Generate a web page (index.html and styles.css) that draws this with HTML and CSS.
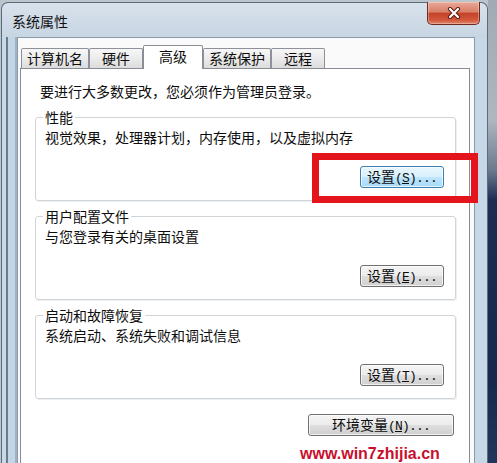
FILE: index.html
```html
<!DOCTYPE html>
<html lang="zh-CN">
<head>
    <meta charset="UTF-8">
    <title>系统属性</title>
    <link rel="stylesheet" href="styles.css">
</head>
<body>
    <div class="screen">
        <div class="window">
            <div class="titlebar">
                <span class="title">系统属性</span>
                <button class="close" aria-label="关闭">
                    <svg width="14" height="12" viewBox="0 0 14 12">
                        <path d="M3 2 L11 10 M11 2 L3 10" stroke="#5a1e12" stroke-width="4.2" stroke-linecap="round" fill="none"/>
                        <path d="M3 2 L11 10 M11 2 L3 10" stroke="#fff" stroke-width="2.2" stroke-linecap="round" fill="none"/>
                    </svg>
                </button>
            </div>
            <div class="frame">
                <div class="client">
                    <div class="tabs">
                        <div class="tab">计算机名</div>
                        <div class="tab">硬件</div>
                        <div class="tab active">高级</div>
                        <div class="tab">系统保护</div>
                        <div class="tab">远程</div>
                    </div>
                    <div class="panel">
                        <p class="note">要进行大多数更改，您必须作为管理员登录。</p>

                        <fieldset class="group">
                            <legend>性能</legend>
                            <p class="desc">视觉效果，处理器计划，内存使用，以及虚拟内存</p>
                            <div class="actions">
                                <button class="btn focused">设置<span class="mn">(<u>S</u>)...</span></button>
                            </div>
                        </fieldset>

                        <fieldset class="group">
                            <legend>用户配置文件</legend>
                            <p class="desc">与您登录有关的桌面设置</p>
                            <div class="actions">
                                <button class="btn">设置<span class="mn">(<u>E</u>)...</span></button>
                            </div>
                        </fieldset>

                        <fieldset class="group">
                            <legend>启动和故障恢复</legend>
                            <p class="desc">系统启动、系统失败和调试信息</p>
                            <div class="actions">
                                <button class="btn">设置<span class="mn">(<u>T</u>)...</span></button>
                            </div>
                        </fieldset>

                        <div class="actions env">
                            <button class="btn wide">环境变量<span class="mn">(<u>N</u>)...</span></button>
                        </div>
                    </div>
                </div>
            </div>
        </div>
        <div class="desk"></div>

        <div class="highlight"></div>
        <div class="watermark">www.win7zhijia.cn</div>
    </div>
</body>
</html>
```

FILE: styles.css
```css
* {
    box-sizing: border-box;
}
body {
    margin: 0;
    font-family: "Noto Sans CJK SC", "Noto Sans", sans-serif;
    font-size: 14px;
    color: #0d0d0d;
}
.screen {
    position: relative;
    display: flex;
    width: 497px;
    height: 463px;
    overflow: hidden;
    background-color: #bcc4cc;
}

/* window frame */
.window {
    flex: 0 0 487px;
    height: 480px;
    margin: 2px 0 0 1px;
    display: flex;
    flex-direction: column;
    border: 1px solid #5d6b79;
    border-bottom: none;
    border-radius: 7px 7px 0 0;
    background: linear-gradient(180deg, #d8e2ec 0, #c6d4e2 36px, #c9d9e7 100%);
}
.titlebar {
    display: flex;
    align-items: flex-start;
    height: 34px;
}
.title {
    margin: 10px 0 0 10px;
    line-height: 16px;
    color: #111;
}
.close {
    display: flex;
    justify-content: center;
    align-items: center;
    width: 53px;
    height: 23px;
    margin: -1px 7px 0 auto;
    padding: 0;
    border: 1px solid #6e2a1d;
    border-top: none;
    border-radius: 0 0 5px 5px;
    background: linear-gradient(180deg, #eaa898 0%, #d9806a 45%, #c4432b 52%, #d2583d 82%, #e2866a 100%);
    box-shadow: inset 0 0 0 1px rgba(255, 255, 255, 0.3);
}
.frame {
    flex: 1;
    display: flex;
    padding: 0 12px 0 15px;
    background:
        linear-gradient(90deg, #c7d9e8 0 4px, #6a7b8c 4px 6px, #c2d5e5 6px 13px, #9fb1c2 13px 15px, transparent 15px),
        #c6d8e7;
}
.client {
    flex: 1;
    display: flex;
    flex-direction: column;
    border: 1px solid #8a9bab;
    border-bottom: none;
    background-color: #fafafa;
}

/* tabs */
.tabs {
    display: flex;
    align-items: flex-end;
    padding: 7px 0 0 3px;
}
.tab {
    height: 20px;
    min-width: 54px;
    padding: 0 5px;
    border: 1px solid #8e919a;
    border-bottom: none;
    border-radius: 2px 2px 0 0;
    background: linear-gradient(180deg, #f7f7f7, #ebebeb 50%, #dcdcdc);
    line-height: 18px;
    text-align: center;
}
.tab.active {
    position: relative;
    z-index: 1;
    height: 24px;
    min-width: 60px;
    margin-bottom: -1px;
    border-color: #898c95;
    background: #fff;
    line-height: 20px;
}
.panel {
    flex: 1;
    margin: 0 4px 0 2px;
    padding: 14px 13px 0 14px;
    border: 1px solid #898c95;
    background-color: #fff;
}
.note {
    margin: 0 0 10px;
    padding-left: 5px;
    line-height: 16px;
}

/* group boxes */
.group {
    min-width: 0;
    margin: 0 0 7px;
    padding: 4px 11px 12px 9px;
    border: 1px solid #d0d5d9;
    border-radius: 3px;
    box-shadow: 1px 1px 0 #eceef0;
}
.group legend {
    margin-left: -2px;
    padding: 0 2px;
    line-height: 16px;
}
.desc {
    margin: 0;
    line-height: 16px;
}
.actions {
    display: flex;
    justify-content: flex-end;
    margin-top: 21px;
}
.actions.env {
    margin: 15px 2px 0 0;
}

/* buttons */
.btn {
    width: 84px;
    height: 22px;
    padding: 0;
    border: 1px solid #707070;
    border-radius: 3px;
    background: linear-gradient(180deg, #f4f4f4 0%, #ececec 48%, #dedede 52%, #d0d0d0 100%);
    box-shadow: inset 0 0 0 1px rgba(255, 255, 255, 0.7);
    font: inherit;
    line-height: 19px;
    color: #0d0d0d;
}
.btn.focused {
    border-color: #3c7fb1;
    background: linear-gradient(180deg, #eaf6fd 0%, #d9f0fc 48%, #bee6fd 52%, #a7d9f5 100%);
}
.btn.wide {
    width: 146px;
}
.mn {
    font-family: "Liberation Mono", monospace;
    font-size: 13px;
    letter-spacing: -0.8px;
}

.desk {
    flex: 1;
    background: linear-gradient(180deg, #a2abb5 0, #aeb6bf 120px, #6c7a8f 170px, #1c2c53 200px, #17284c 380px, #24365c 463px);
}

/* overlays added on the screenshot */
.highlight {
    position: absolute;
    left: 312px;
    top: 153px;
    width: 166px;
    height: 50px;
    border: 7px solid #e3141b;
}
.watermark {
    position: absolute;
    left: 300px;
    top: 445px;
    font-family: "Liberation Sans", Arial, sans-serif;
    font-size: 16px;
    font-weight: bold;
    line-height: 18px;
    color: #c8102e;
}
```
